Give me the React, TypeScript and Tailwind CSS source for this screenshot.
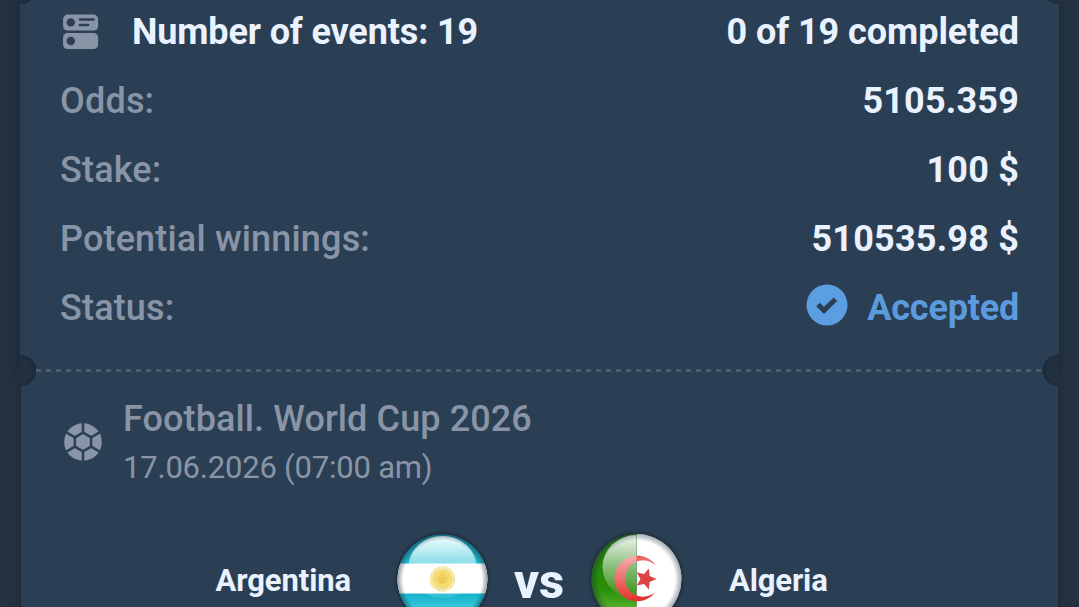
import React from 'react';

const EventsIcon = () => (
  <svg width="36" height="36" viewBox="0 0 36 36" className="shrink-0">
    <rect x="0.1" y="0.6" width="35" height="16" rx="4.5" fill="#8995a7" />
    <rect x="0.1" y="19" width="35" height="16" rx="4.5" fill="#8995a7" />
    <circle cx="7.8" cy="8.4" r="4.2" fill="#2b3f54" />
    <circle cx="7.8" cy="27" r="4.2" fill="#2b3f54" />
    <path d="M17 5.5h13.5M17 11h8" stroke="#2b3f54" strokeWidth="2.7" strokeLinecap="round" />
  </svg>
);

const BallIcon = () => (
  <svg width="38" height="38" viewBox="0 0 38 38" className="shrink-0">
    <circle cx="19" cy="19" r="18.8" fill="#8995a7" />
    <g stroke="#2b3f54" strokeWidth="2.5" fill="none">
      <path d="M19 9.6 27.1 14.3v9.4L19 28.4l-8.1-4.7v-9.4z" />
      <path d="M19 9.6V-1M27.1 14.3l9-5.2M27.1 23.7l9 5.2M19 28.4V39M10.9 23.7l-9 5.2M10.9 14.3l-9-5.2" />
    </g>
  </svg>
);

const AcceptedIcon = () => (
  <svg width="42" height="42" viewBox="0 0 42 42" className="relative -top-[3px] shrink-0">
    <circle cx="21" cy="21" r="20.5" fill="#5b9ee2" />
    <path d="m12 20.4 6 6 11.4-11.2" fill="none" stroke="#2b3f54" strokeWidth="5" />
  </svg>
);

const ArgentinaFlag = () => (
  <svg width="100" height="100" viewBox="0 0 100 100" className="shrink-0">
    <defs>
      <clipPath id="ar-clip"><circle cx="50.5" cy="50.5" r="45" /></clipPath>
      <linearGradient id="ar-gloss" x1="0" y1="0" x2="0" y2="1">
        <stop offset="0" stopColor="#f2ffff" />
        <stop offset="0.25" stopColor="#d5f7fa" stopOpacity="0.85" />
        <stop offset="0.55" stopColor="#c5f3f8" stopOpacity="0.5" />
        <stop offset="1" stopColor="#fff" stopOpacity="0.1" />
      </linearGradient>
      <linearGradient id="ar-blue" x1="0" y1="0" x2="0" y2="1">
        <stop offset="0" stopColor="#128ca7" />
        <stop offset="0.32" stopColor="#20b5cd" />
        <stop offset="0.66" stopColor="#18b5cd" />
        <stop offset="1" stopColor="#70e7ee" />
      </linearGradient>
      <radialGradient id="ar-rim">
        <stop offset="0.87" stopColor="#182c3d" stopOpacity="0" />
        <stop offset="1" stopColor="#182c3d" stopOpacity="0.45" />
      </radialGradient>
      <radialGradient id="ar-shadow">
        <stop offset="0.88" stopColor="#17212d" stopOpacity="0.7" />
        <stop offset="1" stopColor="#17212d" stopOpacity="0" />
      </radialGradient>
    </defs>
    <circle cx="50.5" cy="50.5" r="49.5" fill="url(#ar-shadow)" />
    <g clipPath="url(#ar-clip)">
      <path d="M0 0h101v101H0z" fill="url(#ar-blue)" />
      <ellipse cx="50.5" cy="38" rx="34" ry="31" fill="url(#ar-gloss)" />
      <path d="M0 34.5h101v30H0z" fill="#fff" />
      <circle cx="50.5" cy="50" r="10.8" fill="none" stroke="#f4df80" strokeWidth="4" strokeDasharray="1.5 0.62" />
      <circle cx="50.5" cy="50" r="9.8" fill="#f4dc70" />
      <circle cx="50.5" cy="50" r="4.5" fill="#efd260" stroke="#e5c650" strokeWidth="0.7" />
      <path d="M48.5 49h1.3M51.5 49h1.3M49 52h3" stroke="#cba944" strokeWidth="0.7" />
      <circle cx="50.5" cy="50.5" r="45" fill="url(#ar-rim)" />
    </g>
  </svg>
);

const AlgeriaFlag = () => (
  <svg width="100" height="100" viewBox="0 0 100 100" className="shrink-0">
    <defs>
      <clipPath id="dz-clip"><circle cx="50.5" cy="50" r="45" /></clipPath>
      <clipPath id="dz-half"><path d="M0 0h50.5v100H0z" /></clipPath>
      <linearGradient id="dz-green" x1="0" y1="0" x2="0" y2="1">
        <stop offset="0" stopColor="#247c12" />
        <stop offset="0.6" stopColor="#298d08" />
        <stop offset="1" stopColor="#83d650" />
      </linearGradient>
      <linearGradient id="dz-gloss" x1="0" y1="0" x2="0" y2="1">
        <stop offset="0" stopColor="#fff" stopOpacity="0.95" />
        <stop offset="0.5" stopColor="#fff" stopOpacity="0.45" />
        <stop offset="1" stopColor="#fff" stopOpacity="0.02" />
      </linearGradient>
      <radialGradient id="dz-rim">
        <stop offset="0.85" stopColor="#182c3d" stopOpacity="0" />
        <stop offset="1" stopColor="#182c3d" stopOpacity="0.4" />
      </radialGradient>
      <radialGradient id="dz-shadow">
        <stop offset="0.88" stopColor="#17212d" stopOpacity="0.7" />
        <stop offset="1" stopColor="#17212d" stopOpacity="0" />
      </radialGradient>
    </defs>
    <circle cx="50.5" cy="50" r="49.5" fill="url(#dz-shadow)" />
    <g clipPath="url(#dz-clip)">
      <path d="M50.5 0H101v100H50.5z" fill="#fff" />
      <path d="M0 0h50.5v100H0z" fill="url(#dz-green)" />
      <path d="M69.5 36A22.8 22.8 0 1 0 69.5 63 18.2 18.2 0 1 1 69.5 36z" fill="#e33530" />
      <path d="m70.5 50-6.8 3-.8 7.4-4.9-5.5-7.3 1.5 3.8-6.4-3.8-6.4 7.3 1.5 4.9-5.5.8 7.4z" fill="#db4446" />
      <ellipse cx="50.5" cy="38" rx="34" ry="32" fill="url(#dz-gloss)" clipPath="url(#dz-half)" />
      <path d="M50.5 27.3a22.8 22.8 0 0 1 19 8.7 18.2 18.2 0 0 0-19-3.2z" fill="#fff" fillOpacity="0.25" />
      <circle cx="50.5" cy="50" r="45" fill="url(#dz-rim)" />
    </g>
  </svg>
);

const SummaryRow: React.FC<{ label: string; children: React.ReactNode }> = ({ label, children }) => (
  <div className="flex h-[69px] items-center justify-between">
    <span className="font-medium tracking-[0.17px] text-[#8995a7]">{label}</span>
    <span className="font-bold tracking-[0.2px]">{children}</span>
  </div>
);

export default function App() {
  return (
    <div className="relative flex h-[607px] w-[1079px] flex-col overflow-hidden bg-[#243140] px-5 font-['Roboto',sans-serif] text-[36px] leading-none text-[#eaf2ff]">
      {/* Bet summary */}
      <section className="h-[371px] shrink-0 bg-[#2b3f54] px-10 shadow-[0_0_7px_#192535]">
        <div className="mb-[3px] flex h-[63px] items-center font-bold">
          <div className="ml-[3px] flex w-[69px] shrink-0">
            <EventsIcon />
          </div>
          <span className="tracking-[-0.13px]">Number of events: 19</span>
          <span className="ml-auto tracking-[-0.05px]">0 of 19 completed</span>
        </div>
        <SummaryRow label="Odds:">5105.359</SummaryRow>
        <SummaryRow label="Stake:">100 $</SummaryRow>
        <SummaryRow label="Potential winnings:">510535.98 $</SummaryRow>
        <SummaryRow label="Status:">
          <span className="flex items-center gap-[19px] tracking-[-0.2px] text-[#5b9bdd]">
            <AcceptedIcon />
            Accepted
          </span>
        </SummaryRow>
      </section>

      {/* Event */}
      <section className="mx-px flex-1 bg-[#2b3f54] shadow-[0_4px_7px_#192535]">
        <div className="flex h-[130px] items-start pt-[27px] pl-[42.5px]">
          <div className="mt-[25px] mr-[21.5px] flex">
            <BallIcon />
          </div>
          <div>
            <div className="mt-[3px] font-medium tracking-[0.1px] text-[#8995a7]">Football. World Cup 2026</div>
            <div className="mt-[15px] text-[31px] tracking-[-0.21px] text-[#8995a7]">17.06.2026 (07:00 am)</div>
          </div>
        </div>
        <div className="flex h-[156px] items-center">
          <div className="w-[371px] pt-0.5 pr-[41px] text-right text-[31px] font-bold tracking-[-0.1px]">Argentina</div>
          <ArgentinaFlag />
          <div className="w-[94px] pt-1.5 text-center text-[49px] leading-10 font-extrabold">vs</div>
          <AlgeriaFlag />
          <div className="pt-0.5 pl-[43px] text-[31px] font-bold tracking-[-0.15px]">Algeria</div>
        </div>
      </section>

      {/* Ticket perforation */}
      <div className="absolute top-[369px] left-9 h-[3px] w-[1007px] bg-[repeating-linear-gradient(90deg,#4c5d70_0_5px,transparent_5px_10px)]" />
      <div className="absolute top-[355px] left-5 h-[31px] w-4 rounded-r-full bg-[#222f3e] shadow-[inset_-2px_0_2px_#1b2838]" />
      <div className="absolute top-[355px] right-5 h-[31px] w-4 rounded-l-full bg-[#222f3e] shadow-[inset_2px_0_2px_#1b2838]" />
      <div className="absolute -top-[27px] left-5 h-[31px] w-4 rounded-r-full bg-[#222f3e] shadow-[inset_-2px_0_2px_#1b2838]" />
      <div className="absolute -top-[27px] right-5 h-[31px] w-4 rounded-l-full bg-[#222f3e] shadow-[inset_2px_0_2px_#1b2838]" />
    </div>
  );
}
